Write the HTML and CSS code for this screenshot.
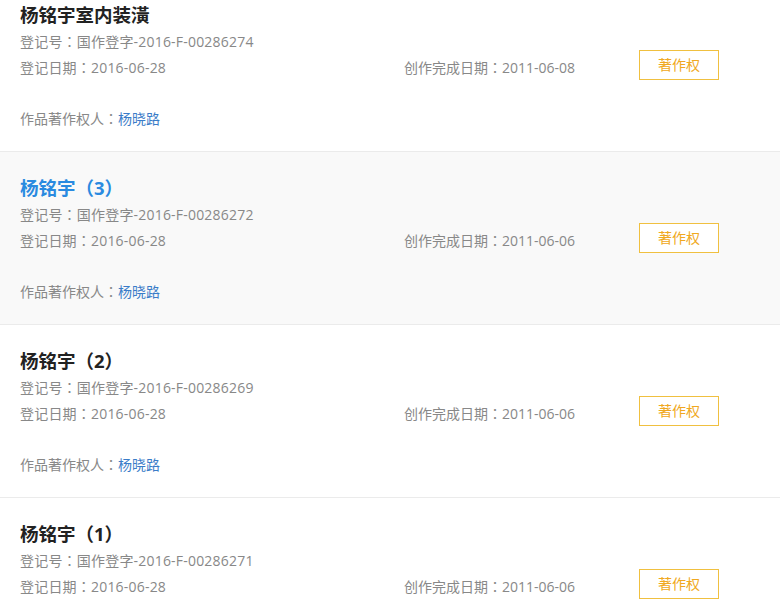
FILE: index.html
```html
<!DOCTYPE html>
<html lang="zh-TW">
<head>
<meta charset="utf-8">
<link rel="stylesheet" href="styles.css">
</head>
<body>
<div class="list">
  <div class="item">
    <div class="title">杨铭宇室内装潢</div>
    <div class="line">登记号：国作登字-2016-F-00286274</div>
    <div class="row">
      <div class="col-a">登记日期：2016-06-28</div>
      <div class="col-b">创作完成日期：2011-06-08</div>
      <a class="btn">著作权</a>
    </div>
    <div class="owner">作品著作权人：<a class="link">杨晓路</a></div>
  </div>
  <div class="item active">
    <div class="title">杨铭宇（3）</div>
    <div class="line">登记号：国作登字-2016-F-00286272</div>
    <div class="row">
      <div class="col-a">登记日期：2016-06-28</div>
      <div class="col-b">创作完成日期：2011-06-06</div>
      <a class="btn">著作权</a>
    </div>
    <div class="owner">作品著作权人：<a class="link">杨晓路</a></div>
  </div>
  <div class="item">
    <div class="title">杨铭宇（2）</div>
    <div class="line">登记号：国作登字-2016-F-00286269</div>
    <div class="row">
      <div class="col-a">登记日期：2016-06-28</div>
      <div class="col-b">创作完成日期：2011-06-06</div>
      <a class="btn">著作权</a>
    </div>
    <div class="owner">作品著作权人：<a class="link">杨晓路</a></div>
  </div>
  <div class="item">
    <div class="title">杨铭宇（1）</div>
    <div class="line">登记号：国作登字-2016-F-00286271</div>
    <div class="row">
      <div class="col-a">登记日期：2016-06-28</div>
      <div class="col-b">创作完成日期：2011-06-06</div>
      <a class="btn">著作权</a>
    </div>
    <div class="owner">作品著作权人：<a class="link">杨晓路</a></div>
  </div>
</div>
</body>
</html>
```
FILE: styles.css
```css
html, body {
  margin: 0;
  padding: 0;
  background: #fff;
  overflow: hidden;
}
body {
  font-family: "Open Sans", "Noto Sans CJK TC", sans-serif;
  font-size: 14px;
  color: #888;
}
.list {
  margin-top: -21px;
}
.item {
  padding: 22px 20px 19px 20px;
  border-bottom: 1px solid #ebebeb;
}
.item.active {
  background: #f9f9f9;
}
.title {
  font-size: 18.5px;
  font-weight: bold;
  line-height: 28px;
  color: #222;
}
.item.active .title {
  color: #2a8ae0;
}
.line {
  line-height: 26px;
  letter-spacing: 0.2px;
}
.row {
  display: flex;
  align-items: flex-start;
  line-height: 26px;
}
.col-a {
  width: 384px;
  letter-spacing: 0.2px;
}
.col-b {
  width: 235px;
}
.btn {
  display: block;
  box-sizing: border-box;
  width: 80px;
  height: 30px;
  margin-top: -5px;
  border: 1px solid #f0c040;
  color: #f0a820;
  text-align: center;
  line-height: 28px;
  font-size: 14px;
  background: #fff;
}
.owner {
  margin-top: 25px;
  line-height: 26px;
}
.link {
  color: #3a7cc8;
}
```
